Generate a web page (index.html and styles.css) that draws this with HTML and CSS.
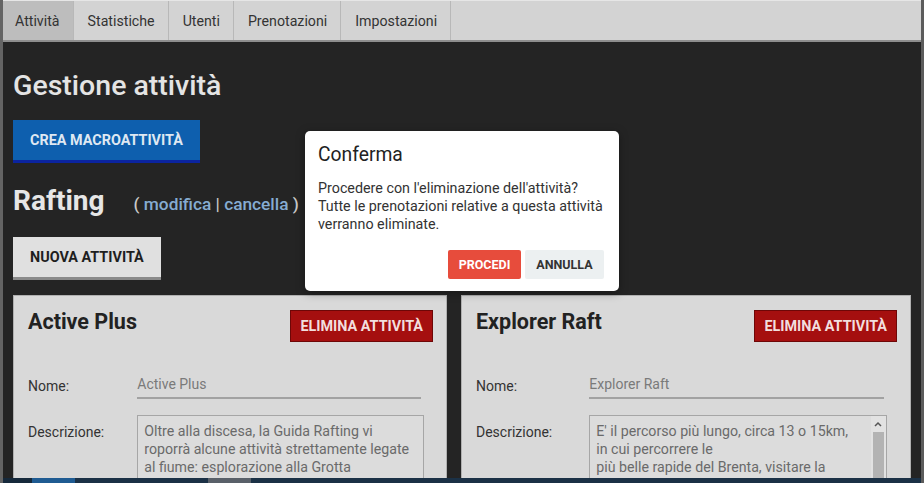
FILE: index.html
```html
<!DOCTYPE html>
<html lang="it">
<head>
<meta charset="utf-8">
<title>Gestione attività</title>
<link rel="stylesheet" href="styles.css">
</head>
<body>
<div class="window">
  <nav class="tabs">
    <a class="tab active">Attività</a>
    <a class="tab">Statistiche</a>
    <a class="tab">Utenti</a>
    <a class="tab">Prenotazioni</a>
    <a class="tab">Impostazioni</a>
  </nav>
  <main class="content">
    <h1 class="page-title">Gestione attività</h1>
    <button class="btn btn-primary">Crea macroattività</button>
    <div class="macro-head">
      <h2 class="macro-title">Rafting</h2>
      <span class="macro-actions">( <a class="link">modifica</a> | <a class="link">cancella</a> )</span>
    </div>
    <button class="btn btn-light">Nuova attività</button>
    <div class="cards">
      <section class="card">
        <div class="card-head">
          <h3 class="card-title">Active Plus</h3>
          <button class="btn btn-danger">Elimina attività</button>
        </div>
        <div class="field">
          <label class="field-label">Nome:</label>
          <div class="field-input">Active Plus</div>
        </div>
        <div class="field field-top">
          <label class="field-label">Descrizione:</label>
          <div class="field-area">
            <div class="area-text">Oltre alla discesa, la Guida Rafting vi
roporrà alcune attività strettamente legate
al fiume: esplorazione alla Grotta
di Oliero, tuffi dagli scogli e nuotate
nelle acque del Brenta.</div>
          </div>
        </div>
      </section>
      <section class="card">
        <div class="card-head">
          <h3 class="card-title">Explorer Raft</h3>
          <button class="btn btn-danger">Elimina attività</button>
        </div>
        <div class="field">
          <label class="field-label">Nome:</label>
          <div class="field-input">Explorer Raft</div>
        </div>
        <div class="field field-top">
          <label class="field-label">Descrizione:</label>
          <div class="field-area">
            <div class="area-text">E' il percorso più lungo, circa 13 o 15km,
in cui percorrere le
più belle rapide del Brenta, visitare la
Grotta dell'Orso e tuffarsi dagli scogli
lungo il fiume, con una sosta
a metà percorso per il pranzo.</div>
            <div class="scrollbar">
              <span class="sb-up"><svg width="8" height="6" viewBox="0 0 8 6"><path d="M1 5 L4 2 L7 5" fill="none" stroke="#555" stroke-width="1.5"/></svg></span>
              <span class="sb-thumb"></span>
            </div>
          </div>
        </div>
      </section>
    </div>
  </main>

  <div class="modal">
    <h4 class="modal-title">Conferma</h4>
    <p class="modal-text">Procedere con l'eliminazione dell'attività?<br>Tutte le prenotazioni relative a questa attività<br>verranno eliminate.</p>
    <div class="modal-actions">
      <button class="mbtn mbtn-red">Procedi</button>
      <button class="mbtn mbtn-grey">Annulla</button>
    </div>
  </div>

  <div class="taskbar">
    <span class="tb-seg tb-a"></span>
    <span class="tb-seg tb-b"></span>
    <span class="tb-seg tb-c"></span>
    <span class="tb-seg tb-d"></span>
    <span class="tb-seg tb-e"></span>
  </div>
</div>
</body>
</html>
```

FILE: styles.css
```css
* { box-sizing: border-box; }

html, body {
  margin: 0;
  padding: 0;
  height: 483px;
  overflow: hidden;
  background: #242424;
}

body {
  font-family: Roboto, "Liberation Sans", sans-serif;
}

.window {
  position: relative;
  width: 924px;
  height: 483px;
  overflow: hidden;
  border-left: 3px solid #646464;
  border-right: 3px solid #5c5c5c;
  background: #242424;
}

/* Tabs */
.tabs {
  display: flex;
  height: 42px;
  background: #d3d3d3;
  border-top: 1px solid #e6e6e6;
  border-bottom: 2px solid #8e8e8e;
}

.tab {
  display: flex;
  align-items: center;
  padding: 0 13px 0 14px;
  font-size: 14.2px;
  color: #333;
  border-right: 1px solid #b8b8b8;
  text-decoration: none;
}

.tab.active {
  background: #bdbdbd;
  padding-left: 12px;
}

/* Content */
.content {
  padding: 0 10px;
  color: #e6e6e6;
}

.page-title {
  margin: 28px 0 0;
  font-size: 28.5px;
  line-height: 32px;
  font-weight: 500;
  color: #e4e4e4;
}

.btn {
  display: block;
  font-family: Roboto, "Liberation Sans", sans-serif;
  font-weight: 700;
  font-size: 14.4px;
  text-transform: uppercase;
  border: 0;
  cursor: pointer;
}

.btn-primary {
  margin-top: 18px;
  height: 43px;
  padding: 0 17px;
  background: #0e5fae;
  color: #dfe8f2;
  border-bottom: 3px solid #0b24a0;
}

.macro-head {
  display: flex;
  align-items: baseline;
  margin-top: 21px;
}

.macro-title {
  margin: 0;
  font-size: 28px;
  line-height: 34px;
  font-weight: 700;
  color: #e6e6e6;
}

.macro-actions {
  margin-left: 29px;
  font-size: 17.3px;
  font-weight: 500;
  color: #c9c9c9;
}

.link {
  color: #86acd2;
  text-decoration: none;
}

.btn-light {
  margin-top: 19px;
  height: 43px;
  padding: 0 17px;
  background: #e0e0e0;
  color: #1e1e1e;
  border-bottom: 3px solid #8a8a8a;
}

/* Cards */
.cards {
  display: grid;
  grid-template-columns: 434px 450px;
  column-gap: 14px;
  margin-top: 15px;
}

.card {
  background: #d9d9d9;
  border: 1px solid #b0b0b0;
  padding: 14px 13px 30px 14px;
  height: 260px;
}

.card-head {
  display: flex;
  justify-content: space-between;
  align-items: flex-start;
}

.card-title {
  margin: 0;
  font-size: 21.5px;
  line-height: 24px;
  font-weight: 700;
  color: #222;
}

.btn-danger {
  height: 32px;
  padding: 0 9px;
  background: #a50f0f;
  color: #f2dede;
  border: 1px solid #6e0707;
}

.field {
  display: grid;
  grid-template-columns: calc(25% + 8px) 70%;
  align-items: center;
  margin-top: 29px;
}

.field-top {
  align-items: start;
  margin-top: 16px;
}

.field-label {
  font-size: 14px;
  color: #333;
  padding-top: 2px;
}

.field-top .field-label {
  padding-top: 8px;
  line-height: 18px;
}

.field-input {
  height: 28px;
  line-height: 26px;
  font-size: 14px;
  color: #7a7a7a;
  border-bottom: 2px solid #a2a2a2;
}

.field-area {
  display: flex;
  width: calc(100% + 3px);
  height: 130px;
  background: #dcdcdc;
  border: 1px solid #a6a6a6;
  overflow: hidden;
}

.area-text {
  flex: 1;
  padding: 6px;
  font-size: 14.2px;
  line-height: 18px;
  color: #6a6a6a;
  white-space: pre-line;
}

.scrollbar {
  display: flex;
  flex-direction: column;
  align-items: center;
  width: 15px;
  background: #e2e2e2;
}

.sb-up {
  display: flex;
  align-items: center;
  justify-content: center;
  width: 15px;
  height: 15px;
}

.sb-thumb {
  display: block;
  width: 11px;
  margin-top: 1px;
  flex: 1;
  background: #b3b3b3;
}

/* Modal */
.modal {
  position: absolute;
  top: 131px;
  left: 302px;
  width: 314px;
  height: 160px;
  padding: 12px 15px 13px 13px;
  background: #ffffff;
  border-radius: 5px;
  box-shadow: 0 2px 10px rgba(0, 0, 0, 0.35);
  color: #2a2a2a;
}

.modal-title {
  margin: 0;
  font-size: 19.3px;
  line-height: 24px;
  font-weight: 400;
  color: #222;
}

.modal-text {
  margin: 12px 0 0;
  font-size: 14.3px;
  line-height: 18px;
  color: #333;
}

.modal-actions {
  display: flex;
  justify-content: flex-end;
  gap: 4px;
  margin-top: 17px;
}

.mbtn {
  height: 29px;
  padding: 0 6px;
  font-family: Roboto, "Liberation Sans", sans-serif;
  font-size: 12.5px;
  font-weight: 700;
  text-transform: uppercase;
  border: 0;
  border-radius: 2px;
}

.mbtn-red {
  width: 73px;
  background: #e74c3c;
  color: #fff;
}

.mbtn-grey {
  width: 79px;
  background: #ecf0f1;
  color: #333;
}

/* Taskbar strip at the very bottom (overlays the page) */
.taskbar {
  position: absolute;
  left: -3px;
  right: -3px;
  bottom: 0;
  height: 5px;
  display: flex;
  background: #1b3146;
}

.tb-seg { display: block; height: 100%; }
.tb-a { width: 32px; background: #16293b; }
.tb-b { width: 43px; background: #1f5b92; }
.tb-c { width: 133px; background: #1b3146; }
.tb-d { width: 43px; background: #596069; }
.tb-e { flex: 1; background: #1b3146; }
```
